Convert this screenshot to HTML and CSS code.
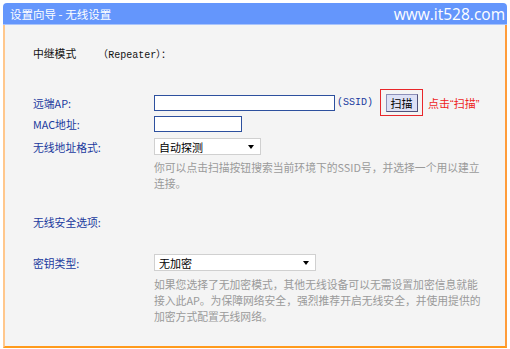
FILE: index.html
```html
<!DOCTYPE html>
<html lang="zh-CN">
<head>
    <meta charset="UTF-8">
    <title>设置向导 - 无线设置</title>
    <link rel="stylesheet" href="styles.css">
</head>
<body>

<div class="panel">
    <div class="title-bar">
        <span class="title">设置向导 - 无线设置</span>
        <span class="site">www.it528.com</span>
    </div>

    <div class="content">
        <!-- mode -->
        <div class="row row-mode">
            <span class="mode-label">中继模式</span>
            <span class="mono">（Repeater）：</span>
        </div>

        <!-- remote AP -->
        <div class="row row-ap">
            <span class="label">远端AP:</span>
            <span class="input input-ssid"></span>
            <span class="mono blue">(SSID)</span>
            <span class="scan-box"><span class="scan-btn">扫描</span></span>
            <span class="hint-red">点击<span class="q">“</span>扫描<span class="q">”</span></span>
        </div>

        <div class="row row-mac">
            <span class="label">MAC地址:</span>
            <span class="input input-mac"></span>
        </div>

        <div class="row row-format">
            <span class="label">无线地址格式:</span>
            <span class="select select-format">自动探测<i class="arrow"></i></span>
        </div>

        <p class="help help-scan">你可以点击扫描按钮搜索当前环境下的SSID号，并选择一个用以建立<br>连接。</p>

        <div class="row row-security">
            <span class="label">无线安全选项:</span>
        </div>

        <div class="row row-key">
            <span class="label">密钥类型:</span>
            <span class="select select-key">无加密<i class="arrow"></i></span>
        </div>

        <p class="help help-key">如果您选择了无加密模式，其他无线设备可以无需设置加密信息就能<br>接入此AP。为保障网络安全，强烈推荐开启无线安全，并使用提供的<br>加密方式配置无线网络。</p>
    </div>
</div>

</body>
</html>
```

FILE: styles.css
```css
body {
    margin: 0;
    background: #fff;
    font-family: "Noto Sans CJK SC", "DejaVu Sans", sans-serif;
    font-size: 10.8px;
}
.panel {
    margin: 3px 0 0 3px;
    width: 504px;
}
.title-bar {
    height: 21px;
    background: #6496fc;
    border-radius: 4px 4px 0 0;
    display: flex;
    justify-content: space-between;
    align-items: center;
    padding: 0 2px 0 7px;
    color: #fff;
    border-bottom: 1px solid #a9c4fb;
}
.title {
    font-size: 11.5px;
}
.site {
    font-family: "Open Sans", "DejaVu Sans", sans-serif;
    font-size: 15.5px;
}
.content {
    background: #f4f4f4;
    border-left: 2px solid #ffc78c;
    border-right: 2px solid #ff9c3a;
    border-bottom: 2px solid #ff9a1c;
    padding: 20px 0 22px 28px;
    height: 323px;
    box-sizing: border-box;
}
.row {
    display: flex;
    align-items: center;
    height: 16px;
}
.label {
    width: 121px;
    flex: none;
    color: #1a3a9e;
}
.mode-label {
    color: #111;
    margin-right: 22px;
}
.mono {
    font-family: "Liberation Mono", monospace;
    font-size: 10px;
    color: #111;
}
.blue {
    color: #1a3a9e;
    margin-left: 2px;
}
.row-ap {
    margin-top: 28px;
    height: 27px;
}
.input {
    display: block;
    height: 16px;
    box-sizing: border-box;
    border: 1px solid #2d509e;
    background: #fff;
}
.input-ssid {
    width: 181px;
}
.input-mac {
    width: 88px;
}
.scan-box {
    margin-left: 7px;
    width: 43px;
    height: 27px;
    box-sizing: border-box;
    border: 1px solid #e8262a;
    display: flex;
    align-items: center;
    justify-content: center;
}
.scan-btn {
    width: 32px;
    height: 18px;
    box-sizing: border-box;
    background: #dde1f6;
    border: 1px solid #8d8fb8;
    border-right-color: #50527a;
    border-bottom-color: #50527a;
    display: flex;
    align-items: center;
    justify-content: center;
    color: #000;
    font-size: 11px;
}
.hint-red {
    color: #ee1c1c;
    margin-left: 5px;
    font-size: 11px;
}
.q {
    font-family: "Liberation Sans", sans-serif;
}
.row-mac {
    height: 16px;
}
.row-format {
    margin-top: 6px;
    height: 17px;
}
.select {
    height: 17px;
    box-sizing: border-box;
    border: 1px solid #d0d0d0;
    background: #fff;
    display: flex;
    align-items: center;
    padding-left: 4px;
    color: #000;
    position: relative;
    font-size: 11px;
}
.select-format {
    width: 107px;
}
.select-key {
    width: 162px;
}
.arrow {
    position: absolute;
    right: 6px;
    top: 6px;
    width: 0;
    height: 0;
    border-left: 3.5px solid transparent;
    border-right: 3.5px solid transparent;
    border-top: 4px solid #000;
}
.help {
    margin: 0 0 0 121px;
    color: #9a9a9a;
    line-height: 16px;
}
.help-scan {
    margin-top: 4px;
}
.row-security {
    margin-top: 23px;
}
.row-key {
    margin-top: 24px;
    height: 17px;
}
.help-key {
    margin-top: 5px;
}
```
